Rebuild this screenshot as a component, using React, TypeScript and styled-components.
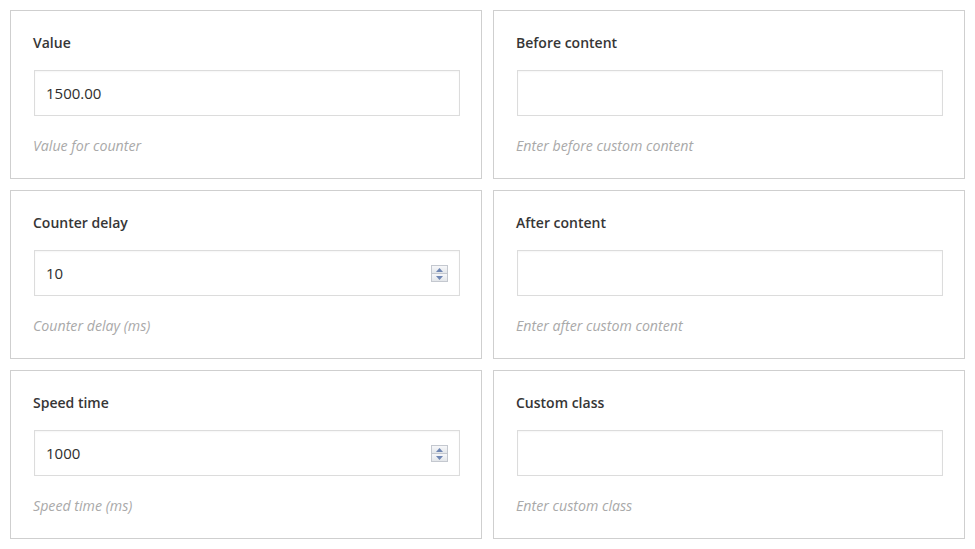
import React from "react";
import styled, { createGlobalStyle } from "styled-components";

const Global = createGlobalStyle`
  html, body { margin: 0; padding: 0; background: #fff; }
  body { font-family: "Open Sans", "Liberation Sans", sans-serif; }
  * { box-sizing: border-box; }
`;

const Page = styled.div`
  padding: 10px;
  display: grid;
  grid-template-columns: 472px 472px;
  column-gap: 11px;
  row-gap: 11px;
`;

const Card = styled.div`
  border: 1px solid #cfcfcf;
  height: 169px;
  padding: 22px 21px 22px 22px;
  display: flex;
  flex-direction: column;
`;

const Label = styled.div`
  font-size: 14px;
  font-weight: 600;
  line-height: 20px;
  color: #363636;
`;

const InputWrap = styled.div`
  position: relative;
  margin: 17px 0 0 1px;
  height: 46px;
`;

const Input = styled.input`
  width: 100%;
  height: 46px;
  border: 1px solid #dcdcdc;
  box-shadow: inset 0 1px 2px rgba(0, 0, 0, 0.04);
  padding: 0 11px;
  font-family: "Open Sans", "Liberation Sans", sans-serif;
  font-size: 15px;
  color: #2e2e2e;
  outline: none;
  background: #fff;
`;

const Spinner = styled.div`
  position: absolute;
  right: 12px;
  top: 15px;
  width: 17px;
  height: 17px;
  display: flex;
  flex-direction: column;
`;

const SpinHalf = styled.div<{ $down?: boolean }>`
  flex: 1;
  border: 1px solid #c4c8cf;
  ${(p) => (p.$down ? "border-top: none;" : "")}
  background: linear-gradient(#f7f8fa, #e3e6ea);
  display: flex;
  align-items: center;
  justify-content: center;
`;

const Help = styled.div`
  margin: 20px 0 0 0;
  font-size: 14.2px;
  font-style: italic;
  line-height: 20px;
  color: #a9a9a9;
`;

type Field = { label: string; value: string; help: string; spin?: boolean };

const fields: Field[] = [
  { label: "Value", value: "1500.00", help: "Value for counter" },
  { label: "Before content", value: "", help: "Enter before custom content" },
  { label: "Counter delay", value: "10", help: "Counter delay (ms)", spin: true },
  { label: "After content", value: "", help: "Enter after custom content" },
  { label: "Speed time", value: "1000", help: "Speed time (ms)", spin: true },
  { label: "Custom class", value: "", help: "Enter custom class" },
];

const Arrow = ({ down }: { down?: boolean }) => (
  <svg width="7" height="4" viewBox="0 0 7 4">
    <path d={down ? "M0 0 H7 L3.5 4 Z" : "M0 4 H7 L3.5 0 Z"} fill="#6f86b3" />
  </svg>
);

export default function App() {
  return (
    <>
      <Global />
      <Page>
        {fields.map((f) => (
          <Card key={f.label}>
            <Label>{f.label}</Label>
            <InputWrap>
              <Input defaultValue={f.value} />
              {f.spin && (
                <Spinner>
                  <SpinHalf>
                    <Arrow />
                  </SpinHalf>
                  <SpinHalf $down>
                    <Arrow down />
                  </SpinHalf>
                </Spinner>
              )}
            </InputWrap>
            <Help>{f.help}</Help>
          </Card>
        ))}
      </Page>
    </>
  );
}
